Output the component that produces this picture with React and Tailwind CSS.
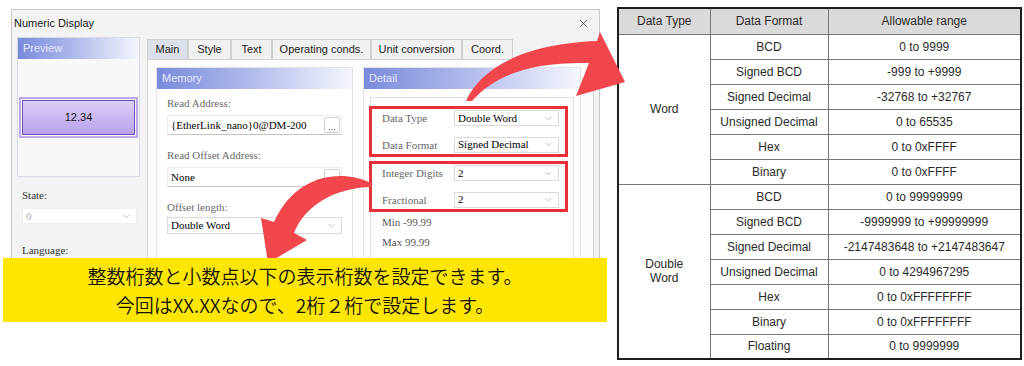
import { X, ChevronDown } from 'lucide-react';

const wordRows = [
  ['BCD', '0 to 9999'],
  ['Signed BCD', '-999 to +9999'],
  ['Signed Decimal', '-32768 to +32767'],
  ['Unsigned Decimal', '0 to 65535'],
  ['Hex', '0 to 0xFFFF'],
  ['Binary', '0 to 0xFFFF'],
];

const dwordRows = [
  ['BCD', '0 to 99999999'],
  ['Signed BCD', '-9999999 to +99999999'],
  ['Signed Decimal', '-2147483648 to +2147483647'],
  ['Unsigned Decimal', '0 to 4294967295'],
  ['Hex', '0 to 0xFFFFFFFF'],
  ['Binary', '0 to 0xFFFFFFFF'],
  ['Floating', '0 to 9999999'],
];

const tabs = [
  ['Main', 'w-[41px]'],
  ['Style', 'w-[43px]'],
  ['Text', 'w-[41px]'],
  ['Operating conds.', 'w-[99px]'],
  ['Unit conversion', 'w-[91px]'],
  ['Coord.', 'w-[51px]'],
];

function PanelHeader({ title }) {
  return (
    <div className="h-[21px] shrink-0 flex items-center pl-[5px] bg-linear-to-r from-[#7a8adb] via-[#b4bdec] to-[#f6f7fd] text-[11px] text-[#e6ebff]">
      {title}
    </div>
  );
}

function Select({ value, className = '', textClass = 'text-black' }) {
  return (
    <div className={`flex items-center justify-between bg-white border border-[#dadada] pl-[3px] pr-[4px] ${className}`}>
      <span className={`font-['Liberation_Serif',serif] text-[11px] leading-none ${textClass}`}>{value}</span>
      <ChevronDown size={11} strokeWidth={1.2} className="text-[#8a8a8a]" />
    </div>
  );
}

function AddressInput({ value, dots }) {
  return (
    <div className="h-[20px] flex items-center justify-between bg-white border border-[#ececec] border-b-[#c4c4c4] pl-[3px] pr-[1px]">
      <span className="font-['Liberation_Serif',serif] text-[11px] text-black leading-none">{value}</span>
      <div className="w-[16px] h-[16px] border border-[#cfcfcf] rounded-[2px] bg-white flex items-end justify-center text-[9px] leading-[9px] text-[#333]">
        {dots ? '...' : ''}
      </div>
    </div>
  );
}

function DetailRow({ label, value, top }) {
  return (
    <div className={`flex items-center ${top}`}>
      <span className="w-[72px] font-['Liberation_Serif',serif] text-[11px] text-[#666]">{label}</span>
      <Select value={value} className="w-[105px] h-[16px]" />
    </div>
  );
}

export default function App() {
  return (
    <div className="relative w-[1024px] h-[366px] overflow-hidden bg-white flex font-['Liberation_Sans',Arial,sans-serif]">
      <div className="w-[612px] shrink-0">
        <div className="ml-[11px] mt-[9px] w-[589px] h-[300px] border border-[#c8c8c8] bg-[#f3f3f3] flex flex-col">
          <div className="h-[27px] shrink-0 flex items-center justify-between pl-[2px] pr-[9px] text-[11px] text-[#1a1a1a]">
            <span>Numeric Display</span>
            <X size={13} strokeWidth={1.3} className="text-[#333]" />
          </div>

          <div className="flex flex-1 min-h-0 pl-[5px] gap-[7px]">
            <div className="w-[123px] shrink-0 flex flex-col">
              <div className="h-[140px] border border-[#d5dae4] bg-[#f8f8f8] flex flex-col">
                <PanelHeader title="Preview" />
                <div className="mt-[38px] mx-[1px] h-[41px] border-2 border-[#bca8ec] p-[1px]">
                  <div className="h-full border border-[#6b52b3] bg-linear-to-b from-[#dccff7] to-[#b8a2eb] flex items-center justify-center text-[11px] text-[#111]">
                    12.34
                  </div>
                </div>
              </div>
              <div className="mt-[11px] pl-[5px] font-['Liberation_Serif',serif] text-[11px] leading-[14px] text-[#333]">State:</div>
              <Select value="0" className="mt-[6px] ml-[5px] w-[115px] h-[16px] bg-[#fbfbfb] border-[#efefef]" textClass="text-[#aaa]" />
              <div className="mt-[19px] pl-[5px] font-['Liberation_Serif',serif] text-[11px] leading-[14px] text-[#333]">Language:</div>
            </div>

            <div className="w-[447px] shrink-0 flex flex-col">
              <div className="mt-[2px] h-[20px] shrink-0 flex">
                {tabs.map(([t, w], i) => (
                  <div
                    key={t}
                    className={`${w} h-full flex items-center justify-center border border-[#cfcfcf] border-b-0 text-[11px] text-[#222] ${i === 0 ? 'bg-[#dbe0ea]' : 'bg-[#f1f1f1]'}`}
                  >
                    {t}
                  </div>
                ))}
              </div>
              <div className="flex-1 border border-[#d2d2d2] bg-[#fcfcfc] flex gap-[10px] pl-[8px] pt-[7px]">
                <div className="w-[197px] border border-[#e2e2e2] bg-white flex flex-col">
                  <PanelHeader title="Memory" />
                  <div className="px-[10px] flex flex-col">
                    <div className="mt-[7px] font-['Liberation_Serif',serif] text-[11px] leading-[14px] text-[#6a6a6a]">Read Address:</div>
                    <div className="mt-[5px]"><AddressInput value="{EtherLink_nano}0@DM-200" dots /></div>
                    <div className="mt-[13px] font-['Liberation_Serif',serif] text-[11px] leading-[14px] text-[#6a6a6a]">Read Offset Address:</div>
                    <div className="mt-[5px]"><AddressInput value="None" /></div>
                    <div className="mt-[13px] font-['Liberation_Serif',serif] text-[11px] leading-[14px] text-[#6a6a6a]">Offset length:</div>
                    <Select value="Double Word" className="mt-[3px] h-[17px]" />
                  </div>
                </div>

                <div className="w-[218px] border border-[#e2e2e2] bg-white flex flex-col">
                  <PanelHeader title="Detail" />
                  <div className="mx-[6px] mt-[8px] flex-1 border border-[#dedede] pt-[8px]">
                    <div className="-ml-[2px] w-[199px] border-[3px] border-[#e8303a] pl-[10px] pt-[1px] pb-[1px]">
                      <DetailRow label="Data Type" value="Double Word" top="" />
                      <DetailRow label="Data Format" value="Signed Decimal" top="mt-[10px]" />
                    </div>
                    <div className="mt-[4px] -ml-[2px] w-[199px] border-[3px] border-[#e8303a] pl-[10px] pt-[1px] pb-[1px]">
                      <DetailRow label="Integer Digits" value="2" top="" />
                      <DetailRow label="Fractional" value="2" top="mt-[10px]" />
                    </div>
                    <div className="mt-[3px] pl-[11px] font-['Liberation_Serif',serif] text-[11px] leading-[14px] text-[#555]">Min -99.99</div>
                    <div className="mt-[6px] pl-[11px] font-['Liberation_Serif',serif] text-[11px] leading-[14px] text-[#555]">Max 99.99</div>
                  </div>
                </div>
              </div>
            </div>
          </div>
        </div>
      </div>

      <div className="ml-[5px] mt-[7px]">
        <table className="w-[403px] table-fixed border-collapse border-2 border-[#1e1e1e] text-[12px] text-[#2a2a2a] text-center">
          <colgroup>
            <col className="w-[92px]" />
            <col className="w-[118px]" />
            <col className="w-[193px]" />
          </colgroup>
          <thead>
            <tr className="h-[26px] bg-[#dadada]">
              <th className="border border-[#777] font-normal">Data Type</th>
              <th className="border border-[#777] font-normal">Data Format</th>
              <th className="border border-[#777] font-normal">Allowable range</th>
            </tr>
          </thead>
          <tbody>
            {wordRows.map(([f, r], i) => (
              <tr key={'w' + i} className="h-[25px]">
                {i === 0 && (
                  <td rowSpan={6} className="border border-[#777]">Word</td>
                )}
                <td className="border border-[#777]">{f}</td>
                <td className="border border-[#777]">{r}</td>
              </tr>
            ))}
            {dwordRows.map(([f, r], i) => (
              <tr key={'d' + i} className="h-[25px]">
                {i === 0 && (
                  <td rowSpan={7} className="border border-[#777] leading-[14px]">Double<br />Word</td>
                )}
                <td className="border border-[#777]">{f}</td>
                <td className="border border-[#777]">{r}</td>
              </tr>
            ))}
          </tbody>
        </table>
      </div>

      {/* curved arrows */}
      <svg className="absolute left-0 top-0 w-[1024px] h-[366px] pointer-events-none" viewBox="0 0 1024 366">
        <path
          d="M466 101 C480 70 520 44 597 41 L600 32 L625 82 L576 96 L589 63 C530 62 495 75 472 101 Z"
          fill="#f0464c"
        />
        <path
          d="M371 183 C340 168 295 175 274 222 L261 218 L268 263 L307 240 L294 233 C305 205 335 188 371 187 Z"
          fill="#f0464c"
        />
      </svg>

      <div className="absolute left-[3px] top-[258px] w-[604px] h-[64px] bg-[#ffe600] flex flex-col items-center justify-center font-['Noto_Sans_CJK_JP',sans-serif] font-[350] text-[19px] leading-[29px] text-[#111]">
        <div>整数桁数と小数点以下の表示桁数を設定できます。</div>
        <div>今回はXX.XXなので、2桁２桁で設定します。</div>
      </div>
    </div>
  );
}
